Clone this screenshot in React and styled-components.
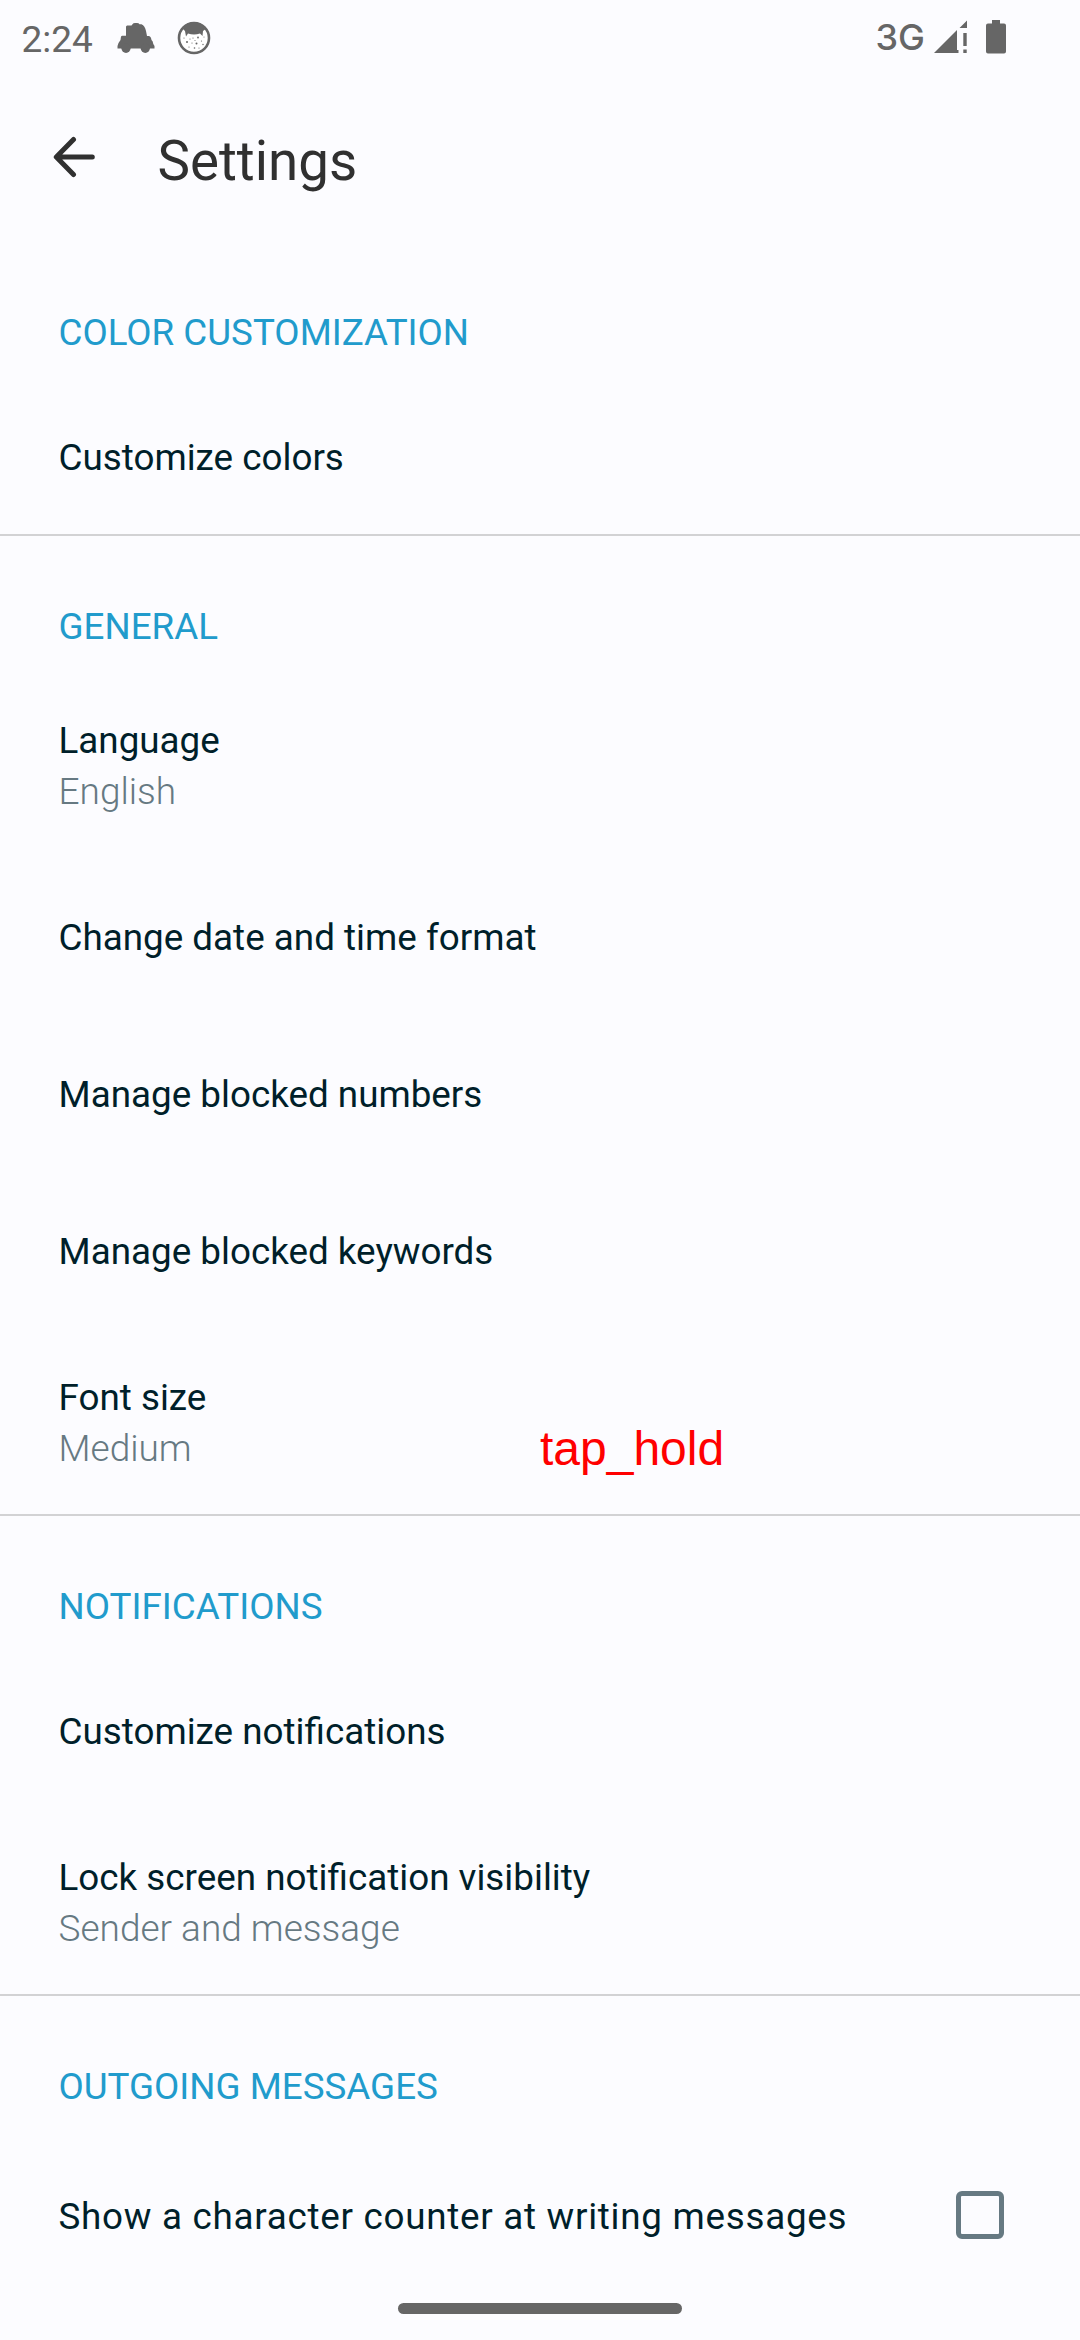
import React from "react";
import styled, { createGlobalStyle } from "styled-components";

const GlobalStyle = createGlobalStyle`
  body { margin: 0; background: #fcfcff; }
  * { box-sizing: border-box; }
`;

const Screen = styled.main`
  position: relative;
  width: 1080px;
  height: 2340px;
  overflow: hidden;
  display: flex;
  flex-direction: column;
  background: #fcfcff;
  font-family: Roboto, "Noto Sans", sans-serif;
`;

const StatusBar = styled.div`
  display: flex;
  align-items: flex-start;
  justify-content: space-between;
  height: 74px;
  padding: 17px 74px 0 21.5px;
  color: #666;
`;

const StatusGroup = styled.div`
  display: flex;
  align-items: flex-start;
`;

const Clock = styled.span`
  width: 95.5px;
  padding-top: 1px;
  font-size: 37px;
  line-height: 44px;
`;

const Network = styled.span`
  margin-right: 9px;
  font-family: Inter, Roboto, sans-serif;
  font-size: 36px;
  font-weight: 500;
  line-height: 41px;
`;

const StatusIcon = styled.svg`
  display: block;
  flex: none;
  margin-top: ${(p) => p.$top}px;
  margin-right: ${(p) => p.$gap || 0}px;
  fill: #666;
`;

const AppBar = styled.header`
  display: flex;
  align-items: center;
  height: 168px;
  padding: 6px 0 0 52px;
`;

const BackButton = styled.button`
  display: flex;
  width: 105.5px;
  padding: 0 0 8px;
  border: 0;
  background: none;
`;

const Title = styled.h1`
  margin: 0;
  color: #303030;
  font-size: 54.7px;
  font-weight: 400;
  line-height: 64px;
`;

const Section = styled.section`
  border-bottom: 2px solid #d2d2d4;

  &:last-of-type {
    border-bottom: 0;
  }
`;

const SectionTitle = styled.h2`
  height: 135px;
  margin: 0;
  padding: 69px 58.5px 0;
  color: #219bcc;
  font-size: 36.75px;
  font-weight: 400;
  line-height: 44px;
  text-transform: uppercase;
`;

const Row = styled.div`
  height: ${(p) => (p.$double ? 186 : 157)}px;
  padding: ${(p) => (p.$double ? 48 : 59)}px 58.5px 0;
`;

const CheckRow = styled.label`
  display: flex;
  align-items: center;
  justify-content: space-between;
  height: 168px;
  padding: 0 76px 0 58.5px;
`;

const Label = styled.div`
  color: #001f2a;
  font-size: 36.8px;
  line-height: 44px;
  letter-spacing: ${(p) => (p.$spaced ? "0.72px" : "normal")};
  padding-top: ${(p) => (p.$spaced ? 3 : 0)}px;
`;

const Value = styled.div`
  margin-top: 7px;
  color: #667982;
  font-size: 37px;
  font-weight: 300;
  line-height: 44px;
`;

const Checkbox = styled.span`
  width: 48px;
  height: 48px;
  border: 5px solid #667982;
  border-radius: 6px;
`;

const GestureLabel = styled.div`
  position: absolute;
  left: 540px;
  top: 1421px;
  color: #f00;
  font-family: "Liberation Sans", Arial, sans-serif;
  font-size: 48px;
  line-height: 55px;
`;

const HomeIndicator = styled.div`
  position: absolute;
  left: 398px;
  bottom: 26.4px;
  width: 284px;
  height: 10.6px;
  border-radius: 6px;
  background: #666;
`;

const sections = [
  { title: "Color customization", rows: [{ label: "Customize colors" }] },
  {
    title: "General",
    rows: [
      { label: "Language", value: "English" },
      { label: "Change date and time format" },
      { label: "Manage blocked numbers" },
      { label: "Manage blocked keywords" },
      { label: "Font size", value: "Medium" },
    ],
  },
  {
    title: "Notifications",
    rows: [
      { label: "Customize notifications" },
      { label: "Lock screen notification visibility", value: "Sender and message" },
    ],
  },
  {
    title: "Outgoing messages",
    rows: [{ label: "Show a character counter at writing messages", checkbox: true }],
  },
];

const freckles = [
  [10, 21, 1], [13, 18, 0.6], [16, 17, 0.6], [21, 16.5, 0.9], [19.5, 22.5, 1],
  [15, 22, 0.6], [24.5, 20, 0.6], [12, 26, 0.6], [17.5, 27, 0.8], [22, 27, 0.6],
  [26, 23.5, 0.7], [7, 17, 0.6], [18, 19.5, 0.5], [27, 16, 0.5],
];

function CarIcon() {
  return (
    <StatusIcon $top={6} $gap={22} width="38" height="30" viewBox="0 0 38 30">
      <path d="M15.5 1.2Q16.2 0 18 0H20Q21.8 0 22.5 1.2H24.500Q28 3 29 8L30 13H32Q34 13.500 34.500 17Q36 18 36.300 21L37.500 23V25.500H.5V23L1.500 20L3.500 17L4 13.500L5 12.700H9V3.500L10 2.500H14.500Z" />
      <circle cx="9" cy="25.3" r="4.600" />
      <circle cx="28.300" cy="25.3" r="4.600" />
    </StatusIcon>
  );
}

function FaceIcon() {
  return (
    <StatusIcon $top={4} width="34" height="34" viewBox="0 0 34 34">
      <circle cx="17" cy="17" r="15" fill="#fff" stroke="#666" strokeWidth="2.6" />
      <path d="M5 7Q10 1 17 1Q24 1 29 7Q28 9 26 10L25.5 15L23 12.5Q17 14.5 11 12.5L9 15.5L8 10Z" />
      {freckles.map(([cx, cy, r]) => (
        <circle key={`${cx}-${cy}`} cx={cx} cy={cy} r={r} />
      ))}
    </StatusIcon>
  );
}

function SignalIcon() {
  return (
    <StatusIcon $top={3} $gap={19} width="33" height="33" viewBox="0 0 33 33">
      <path d="M0 33L23 10V30H24.5V33ZM33 .5V8H25.5ZM29.3 13H32.7V26H29.3ZM29.3 29.5H32.7V33H29.3Z" />
    </StatusIcon>
  );
}

function BatteryIcon() {
  return (
    <StatusIcon $top={3} width="20" height="34" viewBox="0 0 20 34">
      <path d="M6 0H14V3.5H18Q20 3.5 20 5.5V31.5Q20 33.5 18 33.5H2Q0 33.5 0 31.5V5.5Q0 3.5 2 3.5H6Z" />
    </StatusIcon>
  );
}

function BackIcon() {
  return (
    <svg
      width="44"
      height="42"
      viewBox="0 0 44 42"
      fill="none"
      stroke="#303030"
      strokeWidth="5"
      strokeLinecap="round"
      strokeLinejoin="round"
    >
      <path d="M21.5 3.5L4.3 21L21.5 38.5M5 21H40.3" />
    </svg>
  );
}

function SettingRow({ label, value, checkbox }) {
  if (checkbox) {
    return (
      <CheckRow>
        <Label $spaced>{label}</Label>
        <Checkbox role="checkbox" aria-checked="false" />
      </CheckRow>
    );
  }
  return (
    <Row $double={Boolean(value)}>
      <Label>{label}</Label>
      {value && <Value>{value}</Value>}
    </Row>
  );
}

export default function App() {
  return (
    <>
      <GlobalStyle />
      <Screen>
        <StatusBar>
          <StatusGroup>
            <Clock>2:24</Clock>
            <CarIcon />
            <FaceIcon />
          </StatusGroup>
          <StatusGroup>
            <Network>3G</Network>
            <SignalIcon />
            <BatteryIcon />
          </StatusGroup>
        </StatusBar>
        <AppBar>
          <BackButton aria-label="Back">
            <BackIcon />
          </BackButton>
          <Title>Settings</Title>
        </AppBar>
        {sections.map((section) => (
          <Section key={section.title}>
            <SectionTitle>{section.title}</SectionTitle>
            {section.rows.map((row) => (
              <SettingRow key={row.label} {...row} />
            ))}
          </Section>
        ))}
        <GestureLabel>tap_hold</GestureLabel>
        <HomeIndicator />
      </Screen>
    </>
  );
}
